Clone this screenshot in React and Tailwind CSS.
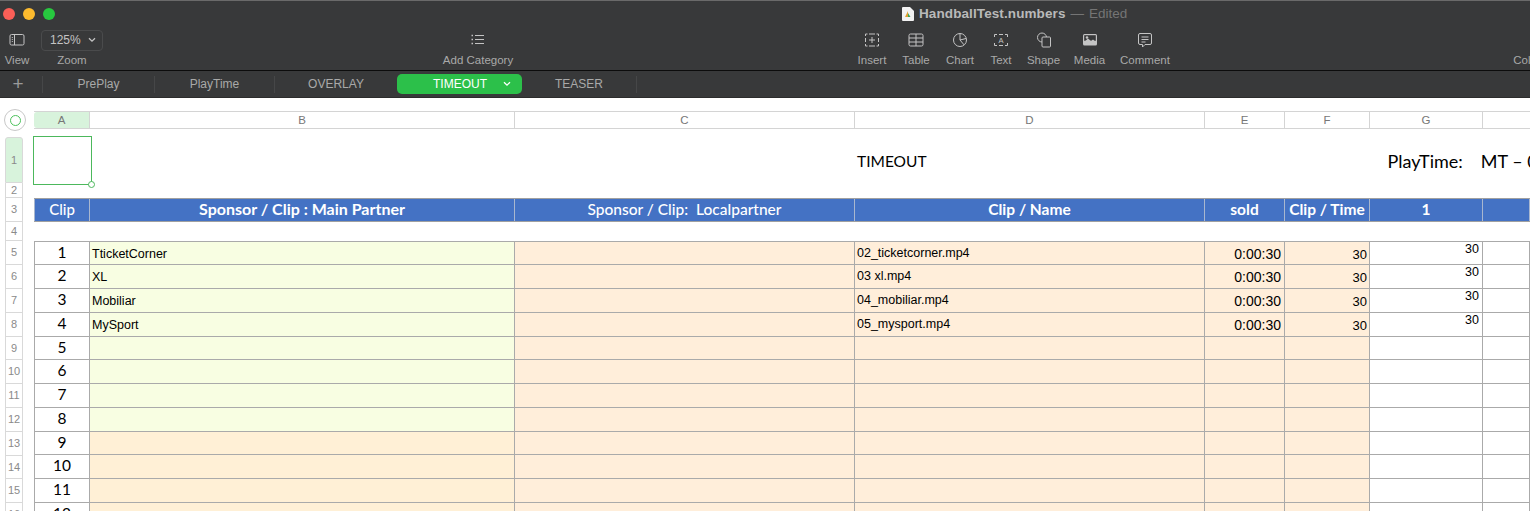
import React from 'react';

const sans = "font-['Helvetica','Liberation_Sans',sans-serif]";

const ToolIcon = ({ children }) => (
  <svg width="20" height="20" viewBox="0 0 20 20" fill="none" stroke="#c4c4c4" strokeWidth="1">{children}</svg>
);

const ToolItem = ({ label, className, children }) => (
  <div className={`flex flex-col items-center shrink-0 ${className}`}>
    <div className="h-[26px] flex items-center justify-center">{children}</div>
    <span className="text-[11.5px] leading-[13px] mt-[1px] text-[#a9a9a9] whitespace-nowrap">{label}</span>
  </div>
);

const Toolbar = () => (
  <div className="h-[40px] flex pl-[4px] overflow-hidden">
    <ToolItem label="View" className="w-[26px]">
      <ToolIcon>
        <rect x="3" y="4.5" width="14" height="10.5" rx="1.5" />
        <path d="M7.5 4.5v10.5M4.8 7.5h1M4.8 9.5h1M4.8 11.5h1" />
      </ToolIcon>
    </ToolItem>
    <ToolItem label="Zoom" className="w-[62px] ml-[11px]">
      <div className="w-[62px] h-[21px] rounded-[4px] border border-[#4a4b4c] flex items-center pl-[8px] gap-[7px] text-[12px] text-[#c4c4c4]">
        125%
        <svg width="8" height="6" viewBox="0 0 8 6" fill="none" stroke="#c4c4c4" strokeWidth="1.3"><path d="M1 1.2l3 3 3-3" /></svg>
      </div>
    </ToolItem>
    <ToolItem label="Add Category" className="w-[74px] ml-[338px]">
      <ToolIcon>
        <path d="M7 5.5h9M7 9.5h9M7 13.5h9" />
        <path d="M3.5 5.5h1.5M3.5 9.5h1.5M3.5 13.5h1.5" strokeWidth="1.4" />
      </ToolIcon>
    </ToolItem>
    <ToolItem label="Insert" className="w-[30px] ml-[342px]">
      <ToolIcon>
        <path d="M3.5 6V4h2M14.5 4h2v2M16.5 14v2h-2M5.5 16h-2v-2M7 4h6M7 16h6M3.5 8v4M16.5 8v4" />
        <path d="M10 7v6M7 10h6" />
      </ToolIcon>
    </ToolItem>
    <ToolItem label="Table" className="w-[28px] ml-[15px]">
      <ToolIcon>
        <rect x="3" y="4" width="14" height="12" rx="1.5" />
        <path d="M3 8h14M3 12h14M10 4v12" />
      </ToolIcon>
    </ToolItem>
    <ToolItem label="Chart" className="w-[30px] ml-[15px]">
      <ToolIcon>
        <circle cx="10" cy="10" r="6.5" />
        <path d="M10 3.5V10l4 4.8M10 10l6-1.5" />
      </ToolIcon>
    </ToolItem>
    <ToolItem label="Text" className="w-[22px] ml-[15px]">
      <ToolIcon>
        <path d="M3.5 7V4.5h2.5M14 4.5h2.5V7M16.5 13v2.5H14M6 15.5H3.5V13M8 4.5h4M8 15.5h4" />
        <text x="10" y="13" fontSize="7.5" textAnchor="middle" fill="#c4c4c4" stroke="none">A</text>
      </ToolIcon>
    </ToolItem>
    <ToolItem label="Shape" className="w-[33px] ml-[15px]">
      <ToolIcon>
        <circle cx="8" cy="7.5" r="4.5" />
        <rect x="8" y="7" width="8.5" height="10" rx="1" fill="#38393a" />
      </ToolIcon>
    </ToolItem>
    <ToolItem label="Media" className="w-[31px] ml-[14px]">
      <svg width="20" height="20" viewBox="0 0 20 20">
        <rect x="3" y="4" width="14" height="11.5" rx="1.5" fill="#c4c4c4" />
        <rect x="4.2" y="5.2" width="11.6" height="5.6" fill="#38393a" />
        <circle cx="7" cy="7.5" r="1.3" fill="#c4c4c4" />
        <path d="M4 12l4-3.5 3 2.5 2-1.5 3 2.5v2H4z" fill="#c4c4c4" />
      </svg>
    </ToolItem>
    <ToolItem label="Comment" className="w-[50px] ml-[15px]">
      <ToolIcon>
        <path d="M5 3.5h10a1.5 1.5 0 0 1 1.5 1.5v8a1.5 1.5 0 0 1-1.5 1.5h-5l-2.5 2.5v-2.5H5A1.5 1.5 0 0 1 3.5 13V5A1.5 1.5 0 0 1 5 3.5z" />
        <path d="M6.5 7h7M6.5 9.5h7M6.5 12h4" />
      </ToolIcon>
    </ToolItem>
    <ToolItem label="Color" className="w-[30px] ml-[342px]">
      <span />
    </ToolItem>
  </div>
);

const Titlebar = () => (
  <div className="h-[71px] bg-[#38393a] border-t border-[#6a6a6a] border-b-[#0c0c0c] border-b relative shrink-0">
    <div className="h-[26px] flex items-center pl-[3px] gap-[8px]">
      <span className="w-[12px] h-[12px] rounded-full bg-[#fb5f57]" />
      <span className="w-[12px] h-[12px] rounded-full bg-[#fdbb2e]" />
      <span className="w-[12px] h-[12px] rounded-full bg-[#27c93f]" />
      <div className="ml-[839px] flex items-center gap-[5px] text-[13.5px]">
        <svg width="12" height="14" viewBox="0 0 12 14">
          <path d="M0 1a1 1 0 0 1 1-1h7l4 4v9a1 1 0 0 1-1 1H1a1 1 0 0 1-1-1z" fill="#f2f2f2" />
          <path d="M6 4v6H3z" fill="#e0a030" />
          <path d="M6 6l2.5 4H6z" fill="#3aa655" />
        </svg>
        <span className="font-bold text-[#b9b9b9] tracking-[0.1px]">HandballTest.numbers</span>
        <span className="text-[#757575]">—</span>
        <span className="text-[#757575]">Edited</span>
      </div>
    </div>
    <Toolbar />
  </div>
);

const Tab = ({ label, className }) => (
  <div className={`h-[17px] flex items-center justify-center text-[12px] text-[#a9a9a9] border-r border-[#464748] shrink-0 ${className}`}>{label}</div>
);

const Tabbar = () => (
  <div className="h-[27px] bg-[#38393a] flex items-center border-b border-[#2c2c2c] shrink-0">
    <div className="w-[43px] h-[17px] flex items-center justify-center pr-[6px] border-r border-[#464748] text-[19px] font-light text-[#9a9a9a] shrink-0">+</div>
    <Tab label="PrePlay" className="w-[112px]" />
    <Tab label="PlayTime" className="w-[120px]" />
    <div className="w-[122px] text-center text-[12px] text-[#a9a9a9] shrink-0">OVERLAY</div>
    <div className="w-[125px] h-[20px] rounded-[5px] bg-[#2cc04a] text-white text-[12px] flex items-center shrink-0">
      <span className="ml-[36px]">TIMEOUT</span>
      <svg className="ml-[16px]" width="8" height="6" viewBox="0 0 8 6" fill="none" stroke="#fff" strokeWidth="1.3"><path d="M1 1.2l3 3 3-3" /></svg>
    </div>
    <Tab label="TEASER" className="w-[115px]" />
  </div>
);

const colsClass = 'grid grid-cols-[56px_425px_340px_350px_80px_85px_113px_47px]';
const lato = "font-['Lato','Liberation_Sans',sans-serif]";

const ColumnHeaders = () => (
  <div className="h-[18px] flex items-start bg-white shrink-0">
    <div className="w-[34px] h-[18px] shrink-0 relative">
      <span className="absolute left-[4px] -top-[2px] w-[22px] h-[22px] rounded-full border border-[#c8c8c8] flex items-center justify-center">
        <span className="w-[11px] h-[11px] rounded-full border border-[#4cc25c]" />
      </span>
    </div>
    <div className={`${colsClass} h-[18px] border-y border-[#d4d4d4] text-[11.5px] leading-[16px] text-[#777] text-center`}>
      <div className="bg-[#d8f3dc] border-r border-[#d4d4d4] rounded-l-[3px]">A</div>
      {['B', 'C', 'D', 'E', 'F', 'G'].map(c => (
        <div key={c} className="border-r border-[#d4d4d4]">{c}</div>
      ))}
      <div />
    </div>
  </div>
);

const rowHeights = [46, 15, 24, 19, 24, 24, 24, 24, 23, 24, 24, 24, 24, 23, 24, 24];

const RowHeaders = () => (
  <div className="w-[34px] shrink-0 pl-[5px] pt-[8px]">
    {rowHeights.map((h, i) => (
      <div
        key={i}
        style={{ height: h }}
        className={`w-[18px] border-x border-b border-[#d9d9d9] text-[11px] flex items-center justify-center text-[#8a8a8a] ${i === 0 ? 'bg-[#d8f3dc] rounded-t-[3px] border-t' : ''}`}
      >
        {i + 1}
      </div>
    ))}
  </div>
);

const clips = [
  { n: 1, h: 23, name: 'TticketCorner', file: '02_ticketcorner.mp4' },
  { n: 2, h: 24, name: 'XL', file: '03 xl.mp4' },
  { n: 3, h: 24, name: 'Mobiliar', file: '04_mobiliar.mp4' },
  { n: 4, h: 24, name: 'MySport', file: '05_mysport.mp4' },
  { n: 5, h: 23 }, { n: 6, h: 24 }, { n: 7, h: 24 }, { n: 8, h: 24 },
  { n: 9, h: 23 }, { n: 10, h: 24 }, { n: 11, h: 24 }, { n: 12, h: 24 },
];

const headers = [
  ['Clip', 'font-medium text-[15px]'],
  ['Sponsor / Clip : Main Partner', 'font-bold text-[16px]'],
  ['Sponsor / Clip:  Localpartner', 'font-medium'],
  ['Clip / Name', 'font-bold'],
  ['sold', 'font-bold'],
  ['Clip / Time', 'font-bold'],
  ['1', 'font-bold'],
  ['', ''],
];

const cell = 'min-h-0 overflow-hidden border-r border-b border-[#aaaaaa] text-black';

const Sheet = () => (
  <div className="flex-1 relative pt-[8px] min-w-0">
    <div className="absolute -left-[1px] top-[7px] w-[59px] h-[49px] border border-[#4cb85c]">
      <span className="absolute -right-[4px] -bottom-[4px] w-[7px] h-[7px] rounded-full border border-[#4cb85c] bg-white" />
    </div>
    <div className={`h-[46px] pt-[3px] flex items-center ${lato} text-black whitespace-nowrap`}>
      <span className="ml-[823px] text-[15.5px]">TIMEOUT</span>
      <span className="ml-[461px] text-[18px]">PlayTime:</span>
      <span className="ml-[18px] text-[18px]">MT – 0</span>
    </div>
    <div className="h-[15px]" />
    <div className={`${colsClass} h-[24px] bg-[#4472c4] border-y border-[#a0a0a0] ${lato} text-[15.5px] leading-[20px] text-white text-center`}>
      {headers.map(([h, w], i) => (
        <div key={i} className={`border-r border-[#a9b7cf] whitespace-pre ${w} ${i === 0 ? 'border-l' : ''}`}>{h}</div>
      ))}
    </div>
    <div className="h-[19px]" />
    <div className="border-t border-[#aaaaaa]">
      {clips.map((c, i) => (
        <div key={c.n} style={{ height: c.h }} className={`${colsClass} grid-rows-[100%]`}>
          <div className={`${cell} border-l bg-white text-center ${lato} text-[15.5px] leading-[21px]`}>{c.n}</div>
          <div className={`${cell} ${i < 8 ? 'bg-[#f8fee2]' : 'bg-[#fff0d6]'} pl-[2px] pt-[1px] text-[12.5px] leading-[22px]`}>{c.name}</div>
          <div className={`${cell} bg-[#ffeeda]`} />
          <div className={`${cell} bg-[#ffeeda] pl-[2px] pt-[1px] text-[12.5px] leading-[21px]`}>{c.file}</div>
          <div className={`${cell} bg-[#ffeeda] text-right pr-[3px] pt-[1px] text-[14px] leading-[22px]`}>{c.file && '0:00:30'}</div>
          <div className={`${cell} bg-[#ffeeda] text-right pr-[2px] pt-[2px] text-[13px] leading-[22px]`}>{c.file && '30'}</div>
          <div className={`${cell} bg-white text-right pr-[3px] text-[12.5px] leading-[14px]`}>{c.file && '30'}</div>
          <div className={`${cell} bg-white`} />
        </div>
      ))}
    </div>
  </div>
);

export default function App() {
  return (
    <div className={`w-[1530px] h-[511px] overflow-hidden bg-white flex flex-col ${sans}`}>
      <Titlebar />
      <Tabbar />
      <div className="h-[13px] bg-white shrink-0" />
      <ColumnHeaders />
      <div className="flex flex-1 min-h-0 overflow-hidden">
        <RowHeaders />
        <Sheet />
      </div>
    </div>
  );
}
